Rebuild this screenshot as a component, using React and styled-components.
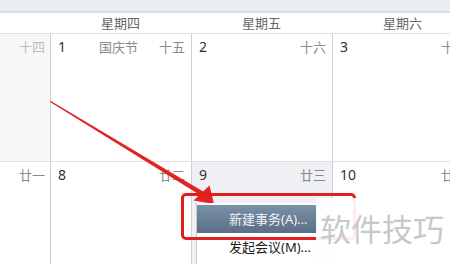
import React from "react";
import styled, { createGlobalStyle } from "styled-components";

const GlobalStyle = createGlobalStyle`
  html, body {
    margin: 0;
    padding: 0;
    background: #fff;
  }
  body {
    font-family: "Noto Sans", "Noto Sans CJK SC", sans-serif;
  }
`;

const days = ["", "星期四", "星期五", "星期六"];

const weeks = [
  [
    { lunar: "十四", muted: true },
    { num: "1", holiday: "国庆节", lunar: "十五" },
    { num: "2", lunar: "十六" },
    { num: "3", lunar: "十七" },
  ],
  [
    { lunar: "廿一" },
    { num: "8", lunar: "廿二" },
    { num: "9", lunar: "廿三", selected: true },
    { num: "10", lunar: "廿四" },
  ],
];

export default function App() {
  return (
    <>
      <GlobalStyle />
      <Page>
        <TopBar />
        <HeaderRow>
          {days.map((d, i) => (
            <DayName key={i}>{d}</DayName>
          ))}
        </HeaderRow>
        {weeks.map((week, wi) => (
          <WeekRow key={wi} $height={wi === 0 ? 127 : 110}>
            {week.map((c, ci) => (
              <Cell key={ci} $first={ci === 0} $muted={c.muted} $selected={c.selected}>
                <DateNum>{c.num}</DateNum>
                <Holiday>{c.holiday}</Holiday>
                <Lunar $muted={c.muted}>{c.lunar}</Lunar>
              </Cell>
            ))}
          </WeekRow>
        ))}

        <Arrow viewBox="0 0 450 264" width="450" height="264">
          <polygon
            points="50,100.5 50.5,102.2 204,197.5 206.5,193.5"
            fill="#e3231f"
          />
          <polygon points="214,204 193.5,200.5 209.5,185.5" fill="#e3231f" />
        </Arrow>

        <Highlight />

        <Menu>
          <MenuItem $active>新建事务(A)...</MenuItem>
          <MenuItem>发起会议(M)...</MenuItem>
        </Menu>

        <Watermark>软件技巧</Watermark>
      </Page>
    </>
  );
}

const Page = styled.div`
  position: relative;
  width: 450px;
  height: 264px;
  overflow: hidden;
  background: #fff;
`;

const TopBar = styled.div`
  height: 11px;
  background: #e9eef5;
  border-bottom: 2px solid #d9dde2;
`;

const HeaderRow = styled.div`
  display: grid;
  grid-template-columns: 50px 141px 141px 141px;
  height: 20px;
  border-bottom: 1px solid #e0e0e0;
`;

const DayName = styled.div`
  font-size: 13px;
  line-height: 20px;
  color: #666;
  text-align: center;
`;

const WeekRow = styled.div`
  display: grid;
  grid-template-columns: 50px 141px 141px 141px;
  height: ${(p) => p.$height}px;
  border-bottom: 1px solid #e0e0e0;
`;

const Cell = styled.div`
  display: flex;
  align-items: flex-start;
  min-width: 0;
  padding: 4px 6px 0 7px;
  border-left: ${(p) => (p.$first ? "none" : "1px solid #cfcfcf")};
  background: ${(p) => (p.$muted ? "#f7f7f7" : p.$selected ? "#eff0f3" : "#fff")};
`;

const DateNum = styled.span`
  font-size: 14px;
  line-height: 18px;
  color: #333;
  white-space: nowrap;
`;

const Holiday = styled.span`
  flex: 1;
  min-width: 0;
  padding-left: 12px;
  text-align: center;
  font-size: 13px;
  line-height: 18px;
  color: #8a8a8a;
  white-space: nowrap;
`;

const Lunar = styled.span`
  flex-shrink: 0;
  font-size: 13px;
  line-height: 18px;
  color: ${(p) => (p.$muted ? "#bdbdbd" : "#8a8a8a")};
  white-space: nowrap;
`;

const Arrow = styled.svg`
  position: absolute;
  left: 0;
  top: 0;
  pointer-events: none;
`;

const Highlight = styled.div`
  position: absolute;
  left: 181px;
  top: 193px;
  width: 169px;
  height: 41px;
  border: 3px solid #e0201f;
  border-radius: 5px;
  z-index: 2;
`;

const Menu = styled.div`
  position: absolute;
  left: 196px;
  top: 203px;
  width: 120px;
  height: 70px;
  padding-top: 2px;
  background: #fff;
  border-left: 1px solid #c9c9c9;
  z-index: 1;
`;

const MenuItem = styled.div`
  height: 28px;
  line-height: 28px;
  padding-left: 32px;
  font-size: 13px;
  white-space: nowrap;
  color: ${(p) => (p.$active ? "#eef2f6" : "#1a1a1a")};
  background: ${(p) =>
    p.$active ? "linear-gradient(#7a90a6, #5a6f85)" : "transparent"};
`;

const Watermark = styled.div`
  position: absolute;
  left: 316px;
  top: 198px;
  right: 0;
  bottom: 0;
  z-index: 3;
  padding: 12px 0 0 4px;
  background: rgba(255, 255, 255, 0.92);
  font-family: "Noto Sans CJK SC", sans-serif;
  font-size: 31px;
  line-height: 36px;
  color: #c8c8c8;
  white-space: nowrap;
`;
